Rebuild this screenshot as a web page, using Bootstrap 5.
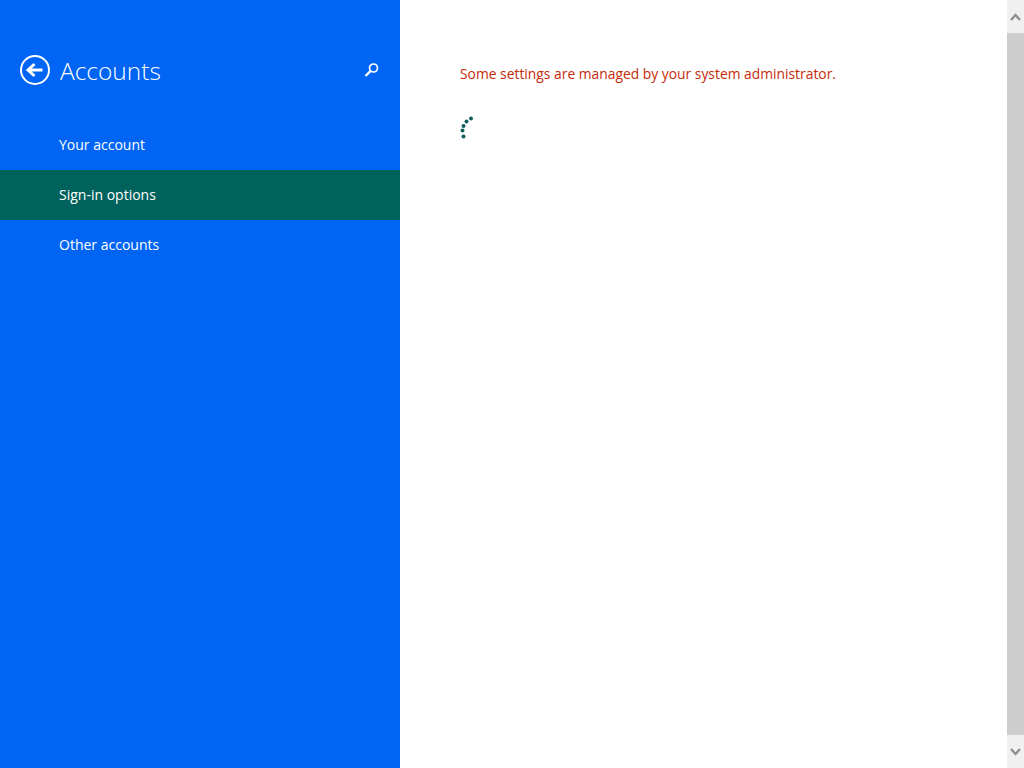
<!DOCTYPE html>
<html lang="en">
<head>
  <meta charset="UTF-8" />
  <meta name="viewport" content="width=device-width, initial-scale=1" />
  <title>Accounts</title>
  <link href="https://cdn.jsdelivr.net/npm/bootstrap@5.3.0/dist/css/bootstrap.min.css" rel="stylesheet" />
  <style>
    html, body {
      height: 100%;
      overflow: hidden;
    }
    body {
      font-family: "Open Sans", "Noto Sans", sans-serif;
    }
    .settings-shell {
      height: 768px;
    }
    .side-pane {
      width: 400px;
      background: #0064f5;
      color: #fff;
    }
    .side-head {
      height: 120px;
      padding: 19px 20px 0 20px;
    }
    .pane-title {
      font-size: 24.5px;
      font-weight: 300;
      margin: 3px 0 0 10px;
      line-height: 1;
    }
    .side-link {
      display: block;
      height: 50px;
      line-height: 50px;
      padding-left: 59px;
      font-size: 14px;
      color: #fff;
      text-decoration: none;
    }
    .side-link.is-current {
      background: #00625c;
    }
    .main-pane {
      padding: 64px 0 0 60px;
    }
    .policy-note {
      color: #c52b08;
      font-size: 13.85px;
      line-height: 20px;
      margin: 0;
    }
    .progress-dots {
      display: block;
      margin-top: 32px;
    }
    .fake-scroll {
      width: 17px;
      background: #f0f0f0;
    }
    .scroll-btn {
      height: 33px;
    }
    .scroll-thumb {
      background: #cdcdcd;
    }
  </style>
</head>
<body>

<div class="settings-shell d-flex">
  <!-- Left pane -->
  <div class="side-pane flex-shrink-0">
    <div class="side-head d-flex align-items-center">
      <svg width="30" height="30" viewBox="0 0 30 30" fill="none" stroke="#fff">
        <circle cx="15" cy="15" r="14" stroke-width="2" />
        <path d="M22.5 15H9M14.5 9L8 15l6.5 6" stroke-width="3" />
      </svg>
      <h1 class="pane-title">Accounts</h1>
      <svg class="ms-auto" width="16" height="16" viewBox="0 0 16 16" fill="none" stroke="#fff">
        <circle cx="9.5" cy="6" r="4" stroke-width="1.7" />
        <path d="M6.5 9l-5 5" stroke-width="2.4" />
      </svg>
    </div>
    <nav>
      <a class="side-link" href="#">Your account</a>
      <a class="side-link is-current" href="#">Sign-in options</a>
      <a class="side-link" href="#">Other accounts</a>
    </nav>
  </div>

  <!-- Right pane -->
  <div class="main-pane flex-grow-1">
    <p class="policy-note">Some settings are managed by your system administrator.</p>
    <svg class="progress-dots" width="16" height="26" viewBox="0 0 16 26" fill="#0f5f5c">
      <circle cx="11" cy="2.5" r="2" />
      <circle cx="6.5" cy="5.5" r="2" />
      <circle cx="3.5" cy="10" r="2" />
      <circle cx="2.5" cy="14.5" r="2" />
      <circle cx="3.5" cy="20.5" r="2" />
    </svg>
  </div>

  <!-- Scrollbar -->
  <div class="fake-scroll d-flex flex-column flex-shrink-0">
    <div class="scroll-btn d-flex align-items-center justify-content-center">
      <svg width="11" height="8" viewBox="0 0 11 8" fill="none" stroke="#8f8f8f" stroke-width="2.4"><path d="M1 7l4.5-5L10 7" /></svg>
    </div>
    <div class="scroll-thumb flex-grow-1"></div>
    <div class="scroll-btn d-flex align-items-center justify-content-center">
      <svg width="11" height="8" viewBox="0 0 11 8" fill="none" stroke="#8f8f8f" stroke-width="2.4"><path d="M1 1l4.5 5L10 1" /></svg>
    </div>
  </div>
</div>

<script src="https://cdn.jsdelivr.net/npm/bootstrap@5.3.0/dist/js/bootstrap.bundle.min.js"></script>
</body>
</html>
